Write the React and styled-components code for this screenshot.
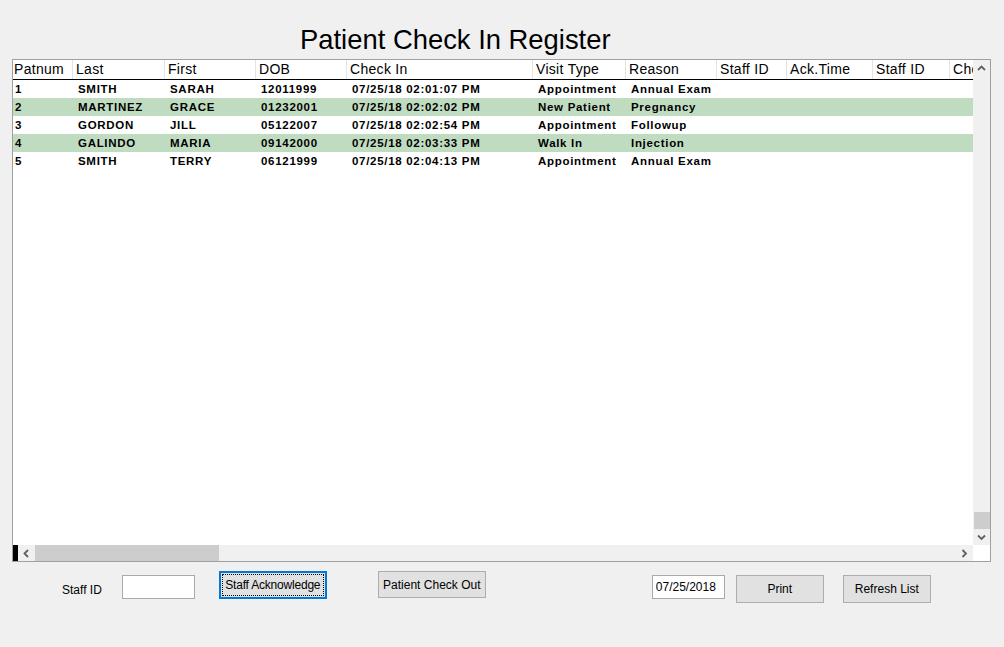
import React from "react";
import styled, { createGlobalStyle } from "styled-components";

const GlobalStyle = createGlobalStyle`
  * { box-sizing: border-box; }
  body {
    margin: 0;
    background: #f0f0f0;
    font-family: "Liberation Sans", Arial, sans-serif;
    color: #000;
  }
`;

const Page = styled.div`
  width: 1004px;
  height: 647px;
  padding: 0 12px;
  background: #f0f0f0;
`;

const TitleBar = styled.div`
  height: 59px;
  padding-top: 26px;
  padding-left: 288px;
  font-size: 27.4px;
  line-height: 1;
  color: #000;
`;

const GridBox = styled.div`
  width: 979px;
  height: 503px;
  border: 1px solid #a0a0a0;
  background: #fff;
  display: grid;
  grid-template-columns: 1fr 17px;
  grid-template-rows: 1fr 16px;
`;

const TableArea = styled.div`
  overflow: hidden;
  background: #fff;
`;

const HeaderRow = styled.div`
  display: flex;
  width: max-content;
  min-width: 100%;
  height: 20px;
  border-bottom: 1px solid #000;
`;

const HeadCell = styled.div`
  flex: none;
  width: ${(p) => p.$w}px;
  height: 19px;
  padding-left: ${(p) => (p.$first ? 1 : 3)}px;
  border-right: 1px solid #e3e3e3;
  font-size: 14px;
  letter-spacing: 0.3px;
  line-height: 19px;
  white-space: nowrap;
  overflow: hidden;
`;

const Row = styled.div`
  display: flex;
  width: max-content;
  min-width: 100%;
  height: 18px;
  background: ${(p) => (p.$alt ? "#c0dcc0" : "#fff")};
`;

const Cell = styled.div`
  flex: none;
  width: ${(p) => p.$w}px;
  padding-left: ${(p) => (p.$first ? 2 : 5)}px;
  font-size: 11.5px;
  font-weight: bold;
  letter-spacing: 0.7px;
  line-height: 18px;
  white-space: nowrap;
  overflow: hidden;
`;

const VScroll = styled.div`
  display: flex;
  flex-direction: column;
  background: #f0f0f0;
`;

const ArrowBtn = styled.div`
  flex: none;
  width: ${(p) => p.$w || 17}px;
  height: ${(p) => p.$h || 17}px;
  display: flex;
  align-items: center;
  justify-content: center;
  background: #f0f0f0;
`;

const VTrack = styled.div`
  flex: 1;
  display: flex;
  flex-direction: column;
  justify-content: flex-end;
  align-items: center;
`;

const VThumb = styled.div`
  width: 16px;
  height: 17px;
  background: #cdcdcd;
`;

const HScroll = styled.div`
  display: flex;
  align-items: stretch;
  background: #f0f0f0;
`;

const BlackMark = styled.div`
  flex: none;
  width: 5px;
  background: #000;
`;

const HTrack = styled.div`
  flex: 1;
  display: flex;
  align-items: stretch;
`;

const HThumb = styled.div`
  width: 184px;
  background: #cdcdcd;
`;

const Corner = styled.div`
  background: #fff;
`;

const Controls = styled.div`
  display: flex;
  align-items: flex-start;
  margin-top: 9px;
`;

const Label = styled.span`
  margin-left: ${(p) => p.$ml}px;
  margin-top: 12px;
  font-size: 12px;
  line-height: 14px;
`;

const TextBox = styled.input`
  margin-left: ${(p) => p.$ml}px;
  margin-top: 4px;
  width: 73px;
  height: 24px;
  border: 1px solid #a9a9a9;
  background: #fff;
  padding: 0 3px;
  font-family: "Liberation Sans", Arial, sans-serif;
  font-size: 12px;
  color: #000;
  outline: none;
`;

const Button = styled.button`
  position: relative;
  margin-left: ${(p) => p.$ml}px;
  margin-top: ${(p) => p.$mt || 0}px;
  width: ${(p) => p.$w}px;
  height: ${(p) => p.$h}px;
  padding: 0;
  background: #e1e1e1;
  border: ${(p) => (p.$focused ? "2px solid #0078d7" : "1px solid #adadad")};
  font-family: "Liberation Sans", Arial, sans-serif;
  font-size: 12px;
  color: #000;
  white-space: nowrap;
  letter-spacing: ${(p) => (p.$focused ? "-0.2px" : "0")};

  ${(p) =>
    p.$focused &&
    `
    &::after {
      content: "";
      position: absolute;
      inset: 1px;
      border: 1px dotted #000;
    }
  `}
`;

const Chevron = ({ dir }) => {
  const pts = {
    up: "1,6 4.5,2.5 8,6",
    down: "1,2.5 4.5,6 8,2.5",
    left: "6,1 2.5,4.5 6,8",
    right: "2.5,1 6,4.5 2.5,8",
  }[dir];
  return (
    <svg width="9" height="9" viewBox="0 0 9 9">
      <polyline points={pts} fill="none" stroke="#606060" strokeWidth="1.8" />
    </svg>
  );
};

const columns = [
  { key: "id", title: "Patnum", w: 60 },
  { key: "last", title: "Last", w: 92 },
  { key: "first", title: "First", w: 91 },
  { key: "dob", title: "DOB", w: 91 },
  { key: "checkIn", title: "Check In", w: 186 },
  { key: "visit", title: "Visit Type", w: 93 },
  { key: "reason", title: "Reason", w: 91 },
  { key: "staff", title: "Staff ID", w: 70 },
  { key: "ack", title: "Ack.Time", w: 86 },
  { key: "staff2", title: "Staff ID", w: 77 },
  { key: "checkOut", title: "Check Out", w: 100 },
];

const patients = [
  { id: "1", last: "SMITH", first: "SARAH", dob: "12011999", checkIn: "07/25/18 02:01:07 PM", visit: "Appointment", reason: "Annual Exam" },
  { id: "2", last: "MARTINEZ", first: "GRACE", dob: "01232001", checkIn: "07/25/18 02:02:02 PM", visit: "New Patient", reason: "Pregnancy" },
  { id: "3", last: "GORDON", first: "JILL", dob: "05122007", checkIn: "07/25/18 02:02:54 PM", visit: "Appointment", reason: "Followup" },
  { id: "4", last: "GALINDO", first: "MARIA", dob: "09142000", checkIn: "07/25/18 02:03:33 PM", visit: "Walk In", reason: "Injection" },
  { id: "5", last: "SMITH", first: "TERRY", dob: "06121999", checkIn: "07/25/18 02:04:13 PM", visit: "Appointment", reason: "Annual Exam" },
];

export default function App() {
  return (
    <>
      <GlobalStyle />
      <Page>
        <TitleBar>Patient Check In Register</TitleBar>

        <GridBox>
          <TableArea>
            <HeaderRow>
              {columns.map((c, i) => (
                <HeadCell key={c.key} $w={c.w} $first={i === 0}>
                  {c.title}
                </HeadCell>
              ))}
            </HeaderRow>
            {patients.map((p, r) => (
              <Row key={p.id} $alt={r % 2 === 1}>
                {columns.map((c, i) => (
                  <Cell key={c.key} $w={c.w} $first={i === 0}>
                    {p[c.key] || ""}
                  </Cell>
                ))}
              </Row>
            ))}
          </TableArea>

          <VScroll>
            <ArrowBtn>
              <Chevron dir="up" />
            </ArrowBtn>
            <VTrack>
              <VThumb />
            </VTrack>
            <ArrowBtn $h={16}>
              <Chevron dir="down" />
            </ArrowBtn>
          </VScroll>

          <HScroll>
            <BlackMark />
            <ArrowBtn $h={16}>
              <Chevron dir="left" />
            </ArrowBtn>
            <HTrack>
              <HThumb />
            </HTrack>
            <ArrowBtn $h={16}>
              <Chevron dir="right" />
            </ArrowBtn>
          </HScroll>
          <Corner />
        </GridBox>

        <Controls>
          <Label $ml={50}>Staff ID</Label>
          <TextBox $ml={20} defaultValue="" />
          <Button $ml={24} $w={108} $h={28} $focused>
            Staff Acknowledge
          </Button>
          <Button $ml={51} $w={108} $h={27}>
            Patient Check Out
          </Button>
          <TextBox $ml={166} defaultValue="07/25/2018" />
          <Button $ml={11} $mt={4} $w={88} $h={28}>
            Print
          </Button>
          <Button $ml={19} $mt={4} $w={88} $h={28}>
            Refresh List
          </Button>
        </Controls>
      </Page>
    </>
  );
}
